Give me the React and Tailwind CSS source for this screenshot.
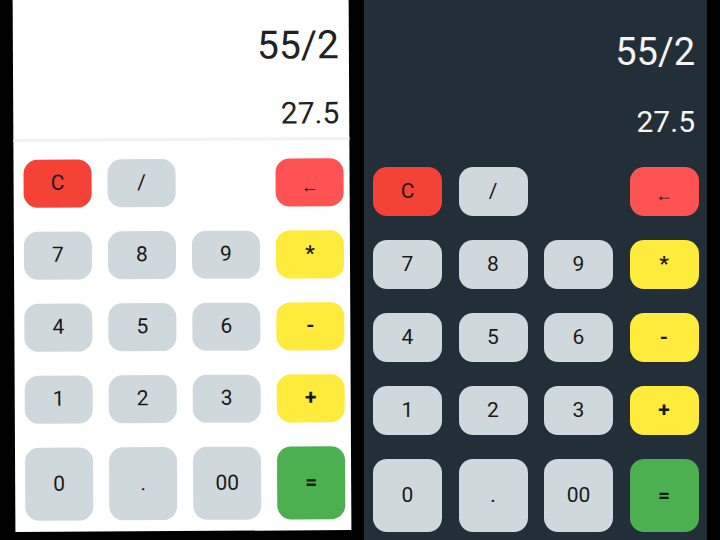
const keys = [
  { label: 'C', kind: 'clear' },
  { label: '/', kind: 'num' },
  { label: '', kind: 'empty' },
  { label: '←', kind: 'back' },
  { label: '7', kind: 'num' },
  { label: '8', kind: 'num' },
  { label: '9', kind: 'num' },
  { label: '*', kind: 'op' },
  { label: '4', kind: 'num' },
  { label: '5', kind: 'num' },
  { label: '6', kind: 'num' },
  { label: '-', kind: 'op' },
  { label: '1', kind: 'num' },
  { label: '2', kind: 'num' },
  { label: '3', kind: 'num' },
  { label: '+', kind: 'op' },
  { label: '0', kind: 'num', tall: true },
  { label: '.', kind: 'num', tall: true },
  { label: '00', kind: 'num', tall: true },
  { label: '=', kind: 'eq', tall: true },
];

const kindClass = {
  clear: 'bg-[#f44336]',
  back: 'bg-[#ff5252]',
  num: 'bg-[#cfd8dc]',
  op: 'bg-[#ffeb3b] font-bold',
  eq: 'bg-[#4caf50] font-bold',
};

function Key({ k, dark }) {
  if (k.kind === 'empty') return <div />;
  const h = k.tall ? 'h-[73px]' : dark ? 'h-[49px]' : 'h-[48px]';
  return (
    <button
      className={`flex items-center justify-center rounded-[14px] text-[21px] text-[#1a1a1a] ${kindClass[k.kind]} ${h}`}
    >
      {k.label === '←' ? <span className="mt-[6px] text-[18px]">←</span> : k.label}
    </button>
  );
}

function LightCalc() {
  return (
    <div className="w-[336px] h-[543px] -mt-[12px] pt-[12px] ml-[14px] bg-white flex flex-col rotate-[-0.3deg]">
      <div className="h-[141px] flex flex-col items-end pr-[10px] border-b-[3px] border-[#f2f2f2]">
        <div className="mt-[22px] text-[39px] leading-[48px] text-[#222]">55/2</div>
        <div className="mt-[26px] text-[30px] leading-[36px] text-[#222]">27.5</div>
      </div>
      <div className="grid grid-cols-[repeat(4,68px)] gap-x-4 gap-y-[24px] pl-[10px] pt-[18px]">
        {keys.map((k, i) => (
          <Key key={i} k={k} />
        ))}
      </div>
    </div>
  );
}

function DarkCalc() {
  return (
    <div className="w-[343px] h-[540px] ml-[14px] bg-[#232f38] flex flex-col">
      <div className="h-[150px] flex flex-col items-end pr-[12px]">
        <div className="mt-[28px] text-[38px] leading-[48px] text-[#f5f5f5]">55/2</div>
        <div className="mt-[28px] text-[30px] leading-[36px] text-[#f5f5f5]">27.5</div>
      </div>
      <div className="grid grid-cols-[repeat(4,69px)] gap-x-[16.5px] gap-y-[24px] pl-[9px] pt-[17px]">
        {keys.map((k, i) => (
          <Key key={i} k={k} dark />
        ))}
      </div>
    </div>
  );
}

export default function App() {
  return (
    <div className="w-[720px] h-[540px] bg-black flex overflow-hidden font-['Roboto',sans-serif]">
      <LightCalc />
      <DarkCalc />
    </div>
  );
}
